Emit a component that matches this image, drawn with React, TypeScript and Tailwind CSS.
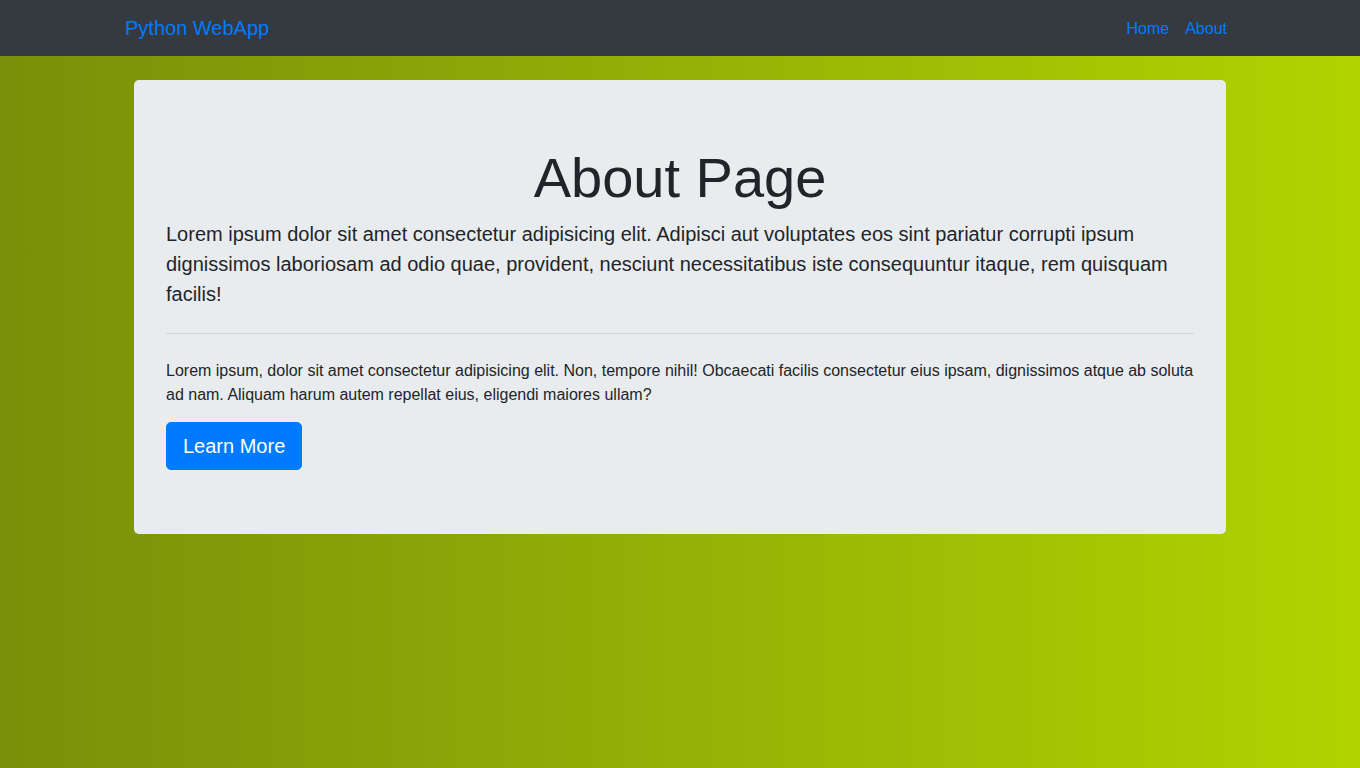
import React from 'react';

const App: React.FC = () => {
  return (
    <div
      className="min-h-screen bg-gradient-to-r from-[#7a8f09] to-[#b1d300] text-[#212529]"
      style={{ fontFamily: '"Liberation Sans", Arial, sans-serif' }}
    >
      {/* Navbar */}
      <nav className="h-14 bg-[#343a40]">
        <div className="mx-auto flex h-full max-w-[1140px] items-center justify-between px-[15px]">
          <a href="#" className="text-xl leading-[30px] text-[#007bff]">
            Python WebApp
          </a>
          <div className="mt-0.5 flex">
            <a href="#" className="px-2 text-base text-[#007bff]">Home</a>
            <a href="#" className="px-2 text-base text-[#007bff]">About</a>
          </div>
        </div>
      </nav>

      {/* Jumbotron */}
      <div className="mx-auto mt-6 w-[1092px]">
        <div className="rounded-[5px] bg-[#e9ecef] px-8 py-16">
          <h1 className="mb-2 text-center text-[56px] font-light leading-[1.2]">About Page</h1>
          <p className="text-xl font-light leading-[30px]">
            Lorem ipsum dolor sit amet consectetur adipisicing elit. Adipisci aut voluptates eos sint pariatur corrupti ipsum dignissimos laboriosam ad odio quae, provident, nesciunt necessitatibus iste consequuntur itaque, rem quisquam facilis!
          </p>
          <hr className="mt-6 mb-[25px] border-t border-[#d5d8db]" />
          <p className="mb-[15px] text-base leading-6">
            Lorem ipsum, dolor sit amet consectetur adipisicing elit. Non, tempore nihil! Obcaecati facilis consectetur eius ipsam, dignissimos atque ab soluta ad nam. Aliquam harum autem repellat eius, eligendi maiores ullam?
          </p>
          <a
            href="#"
            className="inline-block rounded-[5px] border border-[#007bff] bg-[#007bff] px-4 py-2 text-xl leading-[30px] text-white"
          >
            Learn More
          </a>
        </div>
      </div>
    </div>
  );
};

export default App;
